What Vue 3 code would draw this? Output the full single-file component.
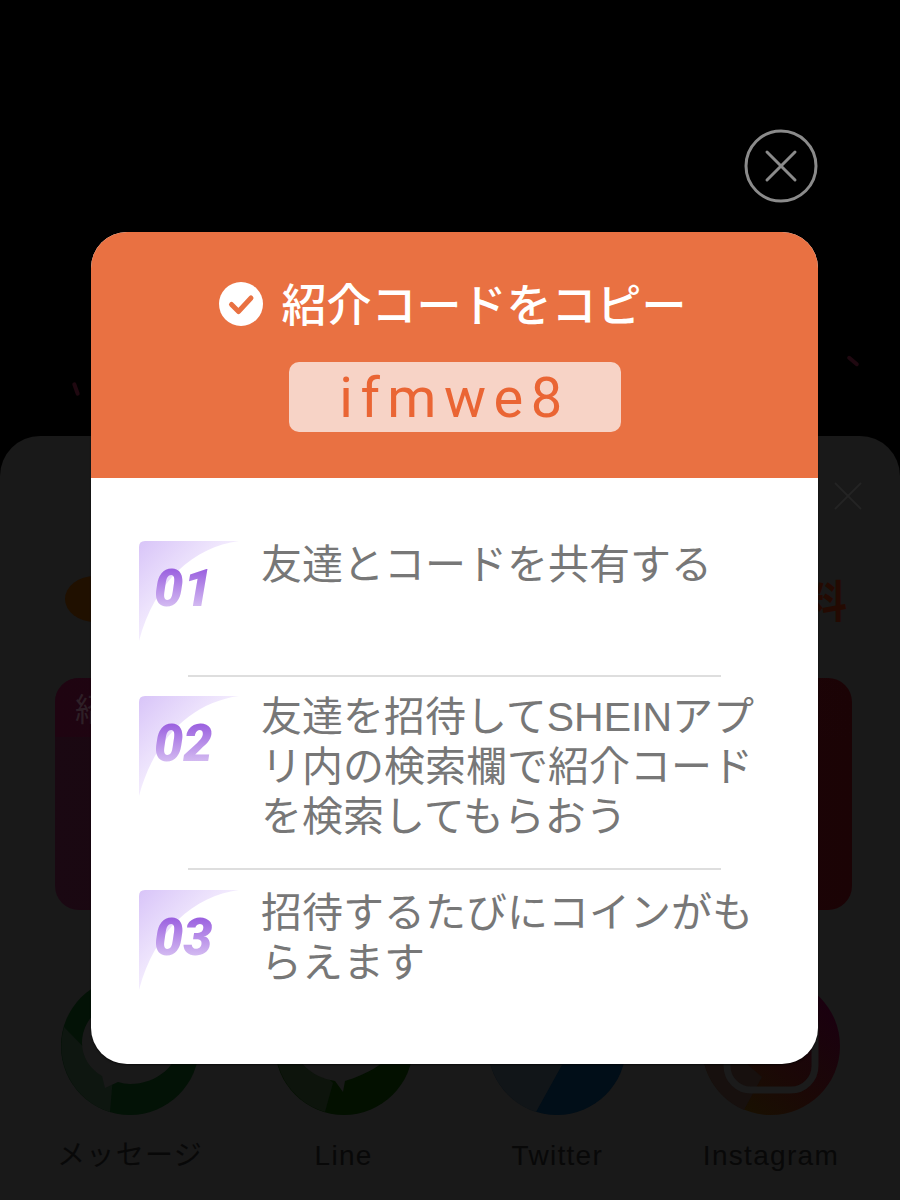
<script setup>
const steps = [
  { no: '01', text: '友達とコードを共有する' },
  { no: '02', text: '友達を招待してSHEINアプリ内の検索欄で紹介コードを検索してもらおう' },
  { no: '03', text: '招待するたびにコインがもらえます' }
]
</script>

<template>
  <div class="screen">
    <!-- dimmed page behind the dialog -->
    <span class="spark spark-left"></span>
    <span class="spark spark-right"></span>

    <div class="sheet">
      <svg class="sheet-close" width="30" height="30" viewBox="0 0 30 30">
        <path d="M2 2 L28 28 M28 2 L2 28" stroke="#242424" stroke-width="2" fill="none" />
      </svg>
      <div class="promo-row">
        <span class="promo-dot"></span>
        <span class="promo-end">料</span>
      </div>
      <div class="promo-card">
        <div class="promo-card-head">紹</div>
      </div>
      <div class="share-row">
        <div class="share">
          <svg width="138" height="138" viewBox="0 0 138 138">
            <circle cx="69" cy="69" r="69" fill="#031206" />
            <path d="M49 135 A69 69 0 0 1 3 50 L52 100 Z" fill="#0e1610" />
            <path d="M69 22 C42 22 21 42 21 66 C21 80 29 92 41 99 L44 111 L57 105 C61 106 65 107 69 107 C96 107 118 88 118 65 C118 42 96 22 69 22 Z" fill="#191919" />
          </svg>
          <span class="share-name">メッセージ</span>
        </div>
        <div class="share">
          <svg width="138" height="138" viewBox="0 0 138 138">
            <circle cx="69" cy="69" r="69" fill="#031000" />
            <path d="M50 135 A69 69 0 0 1 3 50 L58 106 Z" fill="#0d140c" />
            <path d="M69 20 C42 20 19 40 19 64 C19 84 36 100 60 104 L68 115 L70 104 C90 98 120 84 120 64 C120 40 96 20 69 20 Z" fill="#191919" />
          </svg>
          <span class="share-name">Line</span>
        </div>
        <div class="share">
          <svg width="138" height="138" viewBox="0 0 138 138">
            <circle cx="69" cy="69" r="69" fill="#010e18" />
            <path d="M48 135 A69 69 0 0 1 0 69 L74 88 Z" fill="#111518" />
          </svg>
          <span class="share-name">Twitter</span>
        </div>
        <div class="share">
          <svg width="138" height="138" viewBox="0 0 138 138">
            <defs>
              <linearGradient id="insta" x1="0.2" y1="1" x2="0.9" y2="0.2">
                <stop offset="0" stop-color="#181200" />
                <stop offset="0.45" stop-color="#1b0806" />
                <stop offset="1" stop-color="#1a000f" />
              </linearGradient>
            </defs>
            <circle cx="69" cy="69" r="69" fill="url(#insta)" />
            <path d="M42 133 A69 69 0 0 1 3 50 L60 100 Z" fill="#17100e" />
            <rect x="25" y="25" width="88" height="88" rx="24" fill="none" stroke="#1b1b1b" stroke-width="7" />
          </svg>
          <span class="share-name">Instagram</span>
        </div>
      </div>
    </div>

    <button class="close">
      <svg width="74" height="74" viewBox="0 0 74 74">
        <circle cx="37" cy="37" r="35" stroke="#8b8b8b" stroke-width="3" fill="none" />
        <path d="M23 23 L51 51 M51 23 L23 51" stroke="#8b8b8b" stroke-width="3" stroke-linecap="round" fill="none" />
      </svg>
    </button>

    <div class="dialog">
      <div class="head">
        <div class="title">
          <svg width="44" height="44" viewBox="0 0 44 44">
            <circle cx="22" cy="22" r="22" fill="#fff" />
            <path d="M12.5 22.5 L19.5 29.5 L32 16" stroke="#e97142" stroke-width="5" stroke-linecap="round" stroke-linejoin="round" fill="none" />
          </svg>
          <span>紹介コードをコピー</span>
        </div>
        <div class="code">ifmwe8</div>
      </div>
      <div class="body">
        <template v-for="(s, i) in steps" :key="s.no">
          <div v-if="i > 0" class="line"></div>
          <div class="step" :class="'step-' + s.no">
            <svg class="badge" width="100" height="100" viewBox="0 0 100 100">
              <defs>
                <linearGradient :id="'corner' + s.no" x1="0" y1="0" x2="0.75" y2="0.75">
                  <stop offset="0" stop-color="#d8c4f8" />
                  <stop offset="0.6" stop-color="#f1e9fd" />
                  <stop offset="1" stop-color="#ffffff" />
                </linearGradient>
                <linearGradient :id="'digits' + s.no" x1="0" y1="0" x2="0" y2="1">
                  <stop offset="0" stop-color="#8a46da" />
                  <stop offset="1" stop-color="#e6d8f7" />
                </linearGradient>
              </defs>
              <path d="M0 6 Q0 0 6 0 H100 C55 6 16 40 0 100 Z" :fill="'url(#corner' + s.no + ')'" />
              <text x="15" y="65" class="badge-no" :fill="'url(#digits' + s.no + ')'">{{ s.no }}</text>
            </svg>
            <p>{{ s.text }}</p>
          </div>
        </template>
      </div>
    </div>
  </div>
</template>

<style>
html, body { margin: 0; background: #000; }
</style>

<style scoped>
.screen {
  position: relative;
  width: 900px;
  height: 1200px;
  overflow: hidden;
  background: #000;
  font-family: "Liberation Sans", "Noto Sans CJK JP", sans-serif;
}

.spark {
  position: absolute;
  width: 4px;
  height: 14px;
  border-radius: 2px;
  background: #1f0810;
}
.spark-left {
  left: 74px;
  top: 382px;
  transform: rotate(-20deg);
}
.spark-right {
  left: 851px;
  top: 354px;
  transform: rotate(-50deg);
}

.sheet {
  position: absolute;
  left: 0;
  right: 0;
  top: 436px;
  bottom: 0;
  background: #191919;
  border-radius: 40px 40px 0 0;
}
.sheet-close {
  position: absolute;
  top: 45px;
  right: 37px;
}
.promo-row {
  display: flex;
  justify-content: space-between;
  align-items: center;
  padding: 140px 53px 0 65px;
  height: 46px;
}
.promo-dot {
  width: 60px;
  height: 46px;
  border-radius: 50%;
  background: #201000;
}
.promo-end {
  font-size: 44px;
  font-weight: 700;
  color: #240a02;
}
.promo-card {
  margin: 56px 48px 0 55px;
  height: 232px;
  border-radius: 24px;
  background: linear-gradient(90deg, #1a0812, #1b0305);
  overflow: hidden;
}
.promo-card-head {
  height: 59px;
  padding: 6px 20px 0;
  box-sizing: border-box;
  background: linear-gradient(90deg, #1f0411, rgba(31, 4, 17, 0));
  color: #2e2027;
  font-size: 32px;
}
.share-row {
  display: flex;
  justify-content: space-between;
  padding: 67px 60px 0 61px;
}
.share {
  width: 138px;
  display: flex;
  flex-direction: column;
  align-items: center;
  gap: 24px;
}
.share svg { display: block; }
.share-name {
  font-size: 28px;
  line-height: 34px;
  letter-spacing: 1.3px;
  color: #080808;
  white-space: nowrap;
}

.close {
  position: absolute;
  left: 744px;
  top: 129px;
  width: 74px;
  height: 74px;
  padding: 0;
  border: none;
  background: none;
}
.close svg { display: block; }

.dialog {
  position: absolute;
  left: 91px;
  top: 232px;
  width: 727px;
  height: 832px;
  background: #fff;
  border-radius: 36px;
  overflow: hidden;
  box-shadow: 0 1px 2px rgba(0, 0, 0, 0.6);
}
.head {
  height: 246px;
  box-sizing: border-box;
  padding-top: 50px;
  background: #e97142;
  display: flex;
  flex-direction: column;
  align-items: center;
}
.title {
  display: flex;
  align-items: center;
  gap: 18px;
  height: 44px;
  margin-left: -3px;
  font-size: 45px;
  font-weight: 500;
  color: #fff;
  white-space: nowrap;
}
.title svg { flex: none; }
.title span {
  margin-bottom: 3px;
}
.code {
  margin-top: 36px;
  width: 332px;
  height: 70px;
  border-radius: 10px;
  background: #f7d3c6;
  color: #ea6534;
  font-family: Roboto, sans-serif;
  font-size: 56px;
  line-height: 72px;
  letter-spacing: 7.5px;
  text-align: center;
}
.body {
  padding: 0 48px;
}
.line {
  height: 2px;
  margin: 0 49px;
  background: #dedede;
}
.step {
  display: flex;
  box-sizing: border-box;
  position: relative;
}
.step-01 {
  height: 197px;
  padding-top: 62px;
}
.step-02 {
  height: 191px;
  padding-top: 15px;
}
.step-03 {
  padding-top: 18px;
}
.badge {
  flex: none;
  margin: 1px 22px 0 0;
}
.step-02 .badge {
  margin-top: 4px;
}
.step-03 .badge {
  margin-top: 2px;
}
.badge-no {
  font-family: Roboto, sans-serif;
  font-size: 52px;
  font-weight: 900;
  font-style: italic;
}
.step p {
  width: 498px;
  margin: 0;
  font-size: 41px;
  line-height: 50px;
  color: #777;
}
</style>
